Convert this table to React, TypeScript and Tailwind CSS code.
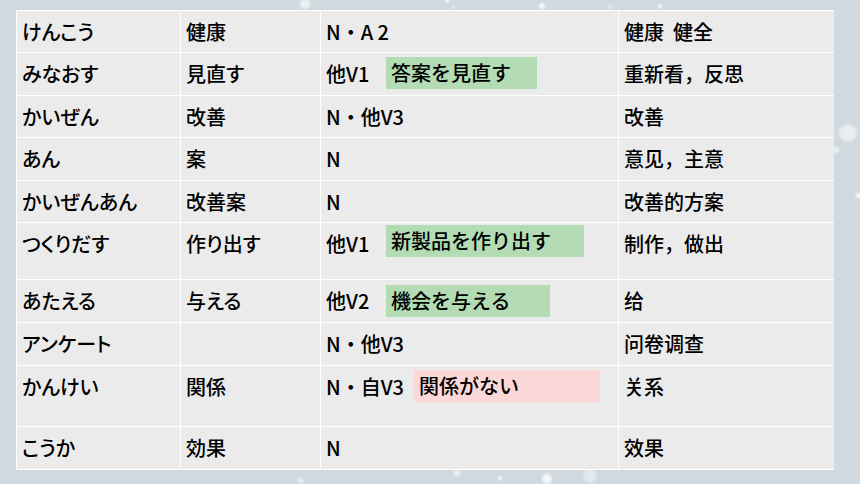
import React from 'react'

interface Row {
  kana: string
  kanji: string
  kind: string
  example?: string
  exampleColor?: 'green' | 'pink'
  labelW?: string
  boxW?: string
  boxMt?: string
  meaning: string
  h: string
}

const rows: Row[] = [
  { kana: 'けんこう', kanji: '健康', kind: 'N・A 2', meaning: '健康  健全', h: 'h-[41px]' },
  { kana: 'みなおす', kanji: '見直す', kind: '他V1', example: '答案を見直す', exampleColor: 'green', labelW: 'w-[60px]', boxW: 'w-[151px]', boxMt: 'mt-[4px]', meaning: '重新看，反思', h: 'h-[42px]' },
  { kana: 'かいぜん', kanji: '改善', kind: 'N・他V3', meaning: '改善', h: 'h-[41px]' },
  { kana: 'あん', kanji: '案', kind: 'N', meaning: '意见，主意', h: 'h-[42px]' },
  { kana: 'かいぜんあん', kanji: '改善案', kind: 'N', meaning: '改善的方案', h: 'h-[41px]' },
  { kana: 'つくりだす', kanji: '作り出す', kind: '他V1', example: '新製品を作り出す', exampleColor: 'green', labelW: 'w-[60px]', boxW: 'w-[198px]', boxMt: 'mt-[2px]', meaning: '制作，做出', h: 'h-[56px]' },
  { kana: 'あたえる', kanji: '与える', kind: '他V2', example: '機会を与える', exampleColor: 'green', labelW: 'w-[60px]', boxW: 'w-[164px]', boxMt: 'mt-[5px]', meaning: '给', h: 'h-[42px]' },
  { kana: 'アンケート', kanji: '', kind: 'N・他V3', meaning: '问卷调查', h: 'h-[42px]' },
  { kana: 'かんけい', kanji: '関係', kind: 'N・自V3', example: '関係がない', exampleColor: 'pink', labelW: 'w-[88px]', boxW: 'w-[186px]', boxMt: 'mt-[4px]', meaning: '关系', h: 'h-[60px]' },
  { kana: 'こうか', kanji: '効果', kind: 'N', meaning: '效果', h: 'h-[42px]' },
]

// snow specks scattered over the backdrop
const flakes = [
  { x: 305, y: 4, s: 10, o: 0.6 },
  { x: 447, y: 1, s: 4, o: 0.8 },
  { x: 453, y: 7, s: 3, o: 0.7 },
  { x: 542, y: 6, s: 6, o: 0.8 },
  { x: 610, y: 7, s: 4, o: 0.6 },
  { x: 660, y: 6, s: 4, o: 0.9 },
  { x: 848, y: 133, s: 18, o: 0.5 },
  { x: 836, y: 150, s: 6, o: 0.6 },
  { x: 858, y: 195, s: 5, o: 0.9 },
  { x: 457, y: 473, s: 6, o: 0.7 },
  { x: 500, y: 478, s: 4, o: 0.9 },
  { x: 547, y: 479, s: 10, o: 0.8 },
  { x: 590, y: 476, s: 14, o: 0.4 },
  { x: 300, y: 480, s: 5, o: 0.6 },
]

const cell = 'bg-[#ebebeb] pl-[5px] pt-[8px] leading-[26px]'
const prop = "[font-feature-settings:'palt']"

export default function App() {
  return (
    <div
      className="relative w-[860px] h-[484px] overflow-hidden bg-[#cfd9df] pt-[10px] pl-[16px] text-[20px] font-medium text-black"
      style={{ fontFamily: '"Noto Sans CJK JP", "Noto Sans", sans-serif' }}
    >
      {flakes.map((f, i) => (
        <div
          key={i}
          className="absolute rounded-full bg-white blur-[1px]"
          style={{ left: f.x - f.s / 2, top: f.y - f.s / 2, width: f.s, height: f.s, opacity: f.o }}
        />
      ))}

      <div className="relative grid w-[818px] grid-cols-[163px_139px_297px_215px] gap-px bg-white p-px">
        {rows.map((r) => (
          <React.Fragment key={r.kana}>
            <div className={`${cell} ${r.h} ${prop}`}>{r.kana}</div>
            <div className={`${cell} ${r.h} ${prop}`}>{r.kanji}</div>
            <div className={`${r.h} flex items-start bg-[#ebebeb] pl-[5px]`}>
              <span className={`pt-[8px] leading-[26px] whitespace-pre ${r.labelW ?? ''}`}>{r.kind}</span>
              {r.example && (
                <span
                  className={`${r.boxW} ${r.boxMt} h-[32px] pl-[5px] leading-[32px] ${
                    r.exampleColor === 'green' ? 'bg-[#b3dcb4]' : 'bg-[#fbd8d7]'
                  }`}
                >
                  {r.example}
                </span>
              )}
            </div>
            <div className={`${cell} ${r.h} whitespace-pre`}>{r.meaning}</div>
          </React.Fragment>
        ))}
      </div>
    </div>
  )
}
